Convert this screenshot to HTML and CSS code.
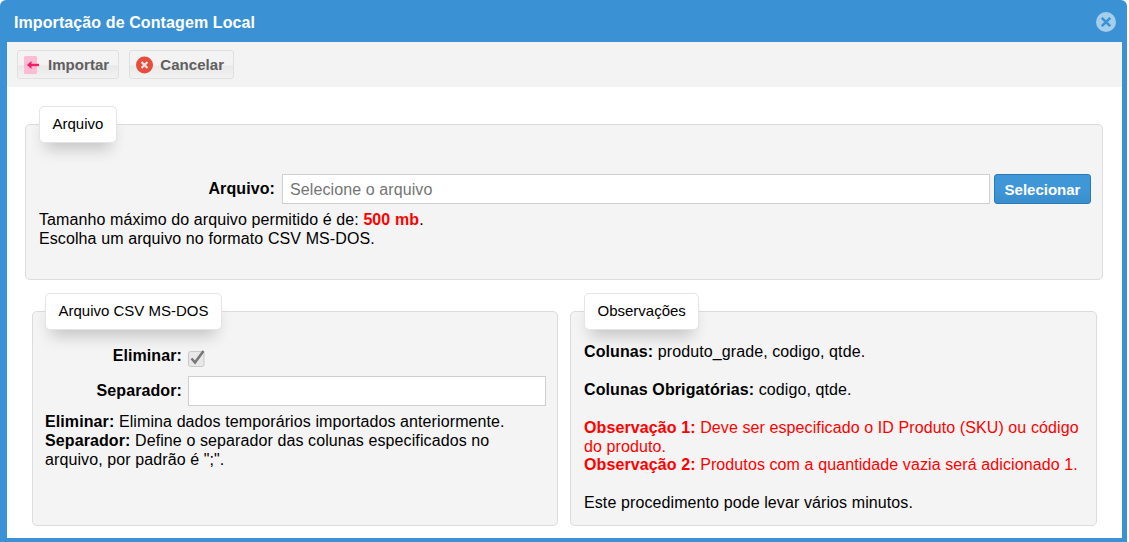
FILE: index.html
```html
<!DOCTYPE html>
<html lang="pt">
<head>
<meta charset="utf-8">
<title>Importação de Contagem Local</title>
<link rel="stylesheet" href="styles.css">
</head>
<body>
<div class="window">
  <header class="titlebar">
    <h1 class="title">Importação de Contagem Local</h1>
    <svg class="close" width="20" height="20" viewBox="0 0 20 20"><circle cx="10" cy="10" r="10" fill="#a5cdec"/><path d="M5.800 5.800l8.400 8.400M14.200 5.800l-8.400 8.400" stroke="#3a92d4" stroke-width="2.600" fill="none"/></svg>
  </header>
  <div class="content">
    <div class="toolbar">
      <button class="tool">
        <svg class="tool-icon" width="17" height="18" viewBox="0 0 17 18"><rect width="13" height="18" rx="1.500" fill="#fdbcd4"/><path d="M5 9h10" stroke="#f01f66" stroke-width="2.400" fill="none"/><path d="M3 9l4.500-4v8z" fill="#f01f66"/></svg>
        Importar
      </button>
      <button class="tool">
        <svg class="tool-icon" width="17" height="18" viewBox="0 0 17 18"><circle cx="8.500" cy="9" r="8.500" fill="#e74c3c"/><path d="M5.500 6l6 6M11.500 6l-6 6" stroke="#fbe6e3" stroke-width="2.200" fill="none"/></svg>
        Cancelar
      </button>
    </div>
    <div class="body">
      <section class="panel panel-file">
        <div class="legend">Arquivo</div>
        <div class="file-row">
          <label class="label label-file">Arquivo:</label>
          <div class="input file-input">Selecione o arquivo</div>
          <button class="select-btn">Selecionar</button>
        </div>
        <p class="text">Tamanho máximo do arquivo permitido é de: <b class="red">500 mb</b>.<br>Escolha um arquivo no formato CSV MS-DOS.</p>
      </section>
      <div class="columns">
        <section class="panel panel-csv">
          <div class="legend">Arquivo CSV MS-DOS</div>
          <div class="form-row row-check">
            <label class="label label-csv">Eliminar:</label>
            <span class="check"><svg width="17" height="18" viewBox="0 0 17 18"><rect x="0.500" y="2.500" width="15.500" height="15" rx="2" fill="#e8e8e8" stroke="#c9c9c9"/><path d="M3.500 9.500l3.500 4L15.500 2" stroke="#777" stroke-width="2.600" fill="none"/></svg></span>
          </div>
          <div class="form-row">
            <label class="label label-csv">Separador:</label>
            <div class="input sep-input"></div>
          </div>
          <p class="text text-csv"><b>Eliminar:</b> Elimina dados temporários importados anteriormente.<br><b>Separador:</b> Define o separador das colunas especificados no arquivo, por padrão é ";".</p>
        </section>
        <section class="panel panel-obs">
          <div class="legend">Observações</div>
          <p class="text text-obs"><b>Colunas:</b> produto_grade, codigo, qtde.<br><br><b>Colunas Obrigatórias:</b> codigo, qtde.<br><br><span class="red"><b>Observação 1:</b> Deve ser especificado o ID Produto (SKU) ou código do produto.<br><b>Observação 2:</b> Produtos com a quantidade vazia será adicionado 1.</span><br><br>Este procedimento pode levar vários minutos.</p>
        </section>
      </div>
    </div>
  </div>
</div>
</body>
</html>
```
FILE: styles.css
```css
* { box-sizing: border-box; }
html, body { margin: 0; height: 100%; overflow: hidden; background: #fff; }
body { font-family: "Liberation Sans", Arial, sans-serif; font-size: 16px; line-height: 18.9px; letter-spacing: 0.1px; color: #000; }

.window {
  width: 1127px;
  height: 542px;
  background: #3a92d4;
  border-radius: 6px 6px 0 0;
  padding: 0 5px 4px 7px;
  display: flex;
  flex-direction: column;
}
.titlebar {
  height: 42px;
  flex: none;
  display: flex;
  align-items: center;
  justify-content: space-between;
  margin-left: -1px;
  padding: 0 6px 0 8px;
}
.title { margin: 4px 0 0; font-size: 16px; font-weight: bold; color: #fff; }
.close { margin-top: 2px; }

.content { flex: 1; background: #fff; overflow: hidden; min-height: 0; }
.toolbar {
  height: 45px;
  background: #f3f3f3;
  display: flex;
  gap: 10px;
  padding: 8px 0 0 10px;
}
.tool {
  height: 29px;
  display: flex;
  align-items: center;
  gap: 7px;
  padding: 0 9px 0 6px;
  border: 1px solid #e0e0e0;
  border-radius: 3px;
  background: linear-gradient(#f3f3f3 50%, #e9e9e9 56%, #f2f2f2);
  font: bold 15px "Liberation Sans", Arial, sans-serif;
  letter-spacing: 0.05px;
  color: #5f5f5f;
}

.body { padding: 37px 19px 0 18px; }
.panel {
  background: #f4f4f4;
  border: 1px solid #dcdcdc;
  border-radius: 5px;
}
.legend {
  display: block;
  width: fit-content;
  height: 37px;
  padding: 0 12.5px;
  line-height: 34px;
  font-size: 15px;
  letter-spacing: 0;
  background: #fff;
  border: 1px solid #e4e4e4;
  border-radius: 5px;
  box-shadow: 0 12px 16px -6px rgba(0, 0, 0, 0.2);
  margin: -19px 0 0 12px;
}
.panel-file { height: 156px; padding-right: 11px; }
.panel-file .legend { margin-left: 13px; }
.file-row { display: flex; align-items: center; margin-top: 31px; }
.label { font-weight: bold; text-align: right; }
.label-file { width: 249px; margin-right: 7px; }
.input { background: #fff; border: 1px solid #cfcfcf; height: 30px; }
.file-input {
  flex: 1;
  padding-left: 7px;
  line-height: 29px;
  color: #757575;
}
.select-btn {
  width: 97px;
  height: 30px;
  margin-left: 4px;
  border: 1px solid #2a78b6;
  border-radius: 3px;
  background: linear-gradient(#3f97d8 50%, #3a8dcc);
  color: #fff;
  font: bold 15px "Liberation Sans", Arial, sans-serif;
}
.text { margin: 0; }
.panel-file .text { margin: 7px 0 0 13px; }

.columns { display: flex; gap: 12px; margin: 31px 6px 0 7px; }
.panel-csv, .panel-obs { height: 215px; }
.panel-csv { width: 526px; flex: none; }
.panel-obs { flex: 1; }
.panel-obs .legend { margin-left: 13px; }
.form-row { display: flex; align-items: center; }
.row-check { height: 21px; margin-top: 16px; }
.label-csv { width: 149px; margin-right: 6px; }
.check { display: flex; margin-top: 3px; }
.form-row + .form-row { margin-top: 9px; }
.sep-input { width: 358px; }
.text-csv { margin: 7px 20px 0 12px; }
.text-obs { margin: 13px 8px 0 13px; }
.red { color: #f00; }
```
